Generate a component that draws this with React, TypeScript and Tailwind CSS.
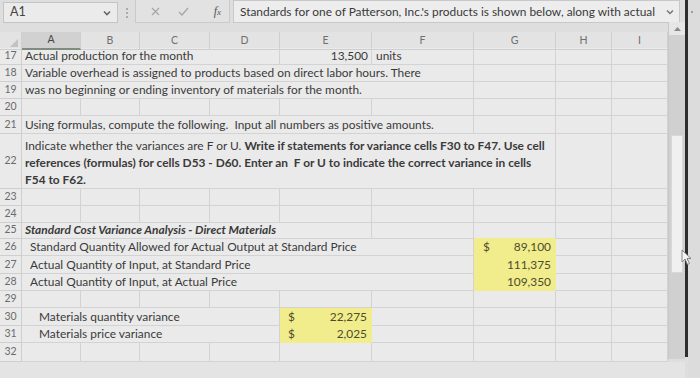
import React from "react";

type CellDef = {
  span: string;
  content?: React.ReactNode;
  cls?: string;
};

const grid =
  "grid grid-cols-[22px_59px_59px_70px_70px_92px_102px_82px_56px_56px]";

function Row({ num, h, cells }: { num: number; h: string; cells: CellDef[] }) {
  return (
    <div className={`${grid} ${h}`}>
      <div className="flex items-center justify-center border-r border-b border-[#cfcfcf] text-[10.5px] text-[#6b6b6b]">
        {num}
      </div>
      {cells.map((c, i) => (
        <div
          key={i}
          className={`${c.span} flex items-center overflow-hidden whitespace-nowrap border-r border-b ${c.cls ?? "border-[#d3d3d3]"}`}
        >
          {c.content}
        </div>
      ))}
    </div>
  );
}

const e = (n: number): CellDef[] => Array.from({ length: n }, () => ({ span: "col-span-1" }));

const Y = "bg-[#f1ed8c] border-[#f1ed8c]";

function Money({ sign, value, pl }: { sign: boolean; value: string; pl: string }) {
  return (
    <div className={`flex w-full items-center justify-between ${pl} pr-[4px] text-[#4d4b2e]`}>
      <span>{sign ? "$" : ""}</span>
      <span>{value}</span>
    </div>
  );
}

export default function App() {
  return (
    <div className="relative flex h-[378px] w-[700px] overflow-hidden bg-[#dedede] font-['Lato',sans-serif] text-[11.9px] text-[#3a3a3a]">
      <div className="flex w-[685px] flex-col">
        {/* formula bar */}
        <div className="flex h-[32px] items-start pt-[2px]">
          <div className="ml-[3px] flex h-[21px] w-[115px] items-center justify-between border border-[#c4c4c4] bg-[#ebebeb] pl-[6px] pr-[6px] text-[12.5px] text-[#444]">
            <span>A1</span>
            <svg width="8" height="6" viewBox="0 0 8 6">
              <path d="M1 1.5 L4 4.5 L7 1.5" stroke="#666" strokeWidth="1.6" fill="none" />
            </svg>
          </div>
          <div className="flex h-[21px] w-[17px] flex-col items-center justify-center gap-[2px]">
            <span className="h-[2px] w-[2px] rounded-full bg-[#9a9a9a]" />
            <span className="h-[2px] w-[2px] rounded-full bg-[#9a9a9a]" />
            <span className="h-[2px] w-[2px] rounded-full bg-[#9a9a9a]" />
          </div>
          <div className="-mt-[2px] flex h-[23px] w-[95px] items-center border-x border-b border-[#cacaca] bg-[#e2e2e2] pl-[15px] pr-[8px]">
            <svg width="9" height="9" viewBox="0 0 9 9">
              <path d="M1 1 L8 8 M8 1 L1 8" stroke="#a6a6a6" strokeWidth="1.2" />
            </svg>
            <svg className="ml-[18px]" width="11" height="9" viewBox="0 0 11 9">
              <path d="M1 5 L4 8 L10 1" stroke="#a6a6a6" strokeWidth="1.3" fill="none" />
            </svg>
            <span className="ml-auto font-['Liberation_Serif',serif] text-[12px] italic text-[#555]">
              f<span className="text-[9px]">x</span>
            </span>
          </div>
          <div className="-mt-[2px] ml-[3px] flex h-[23px] w-[447px] items-center gap-[3px] border border-[#c8c8c8] bg-[#ededed] pl-[6px] pr-[5px] text-[11.9px] text-[#3a3a3a]">
            <span className="min-w-0 flex-1 whitespace-nowrap">
              Standards for one of Patterson, Inc.'s products is shown below, along with actual
            </span>
            <svg className="shrink-0" width="8" height="6" viewBox="0 0 8 6">
              <path d="M1 1.5 L4 4.5 L7 1.5" stroke="#777" strokeWidth="1.5" fill="none" />
            </svg>
          </div>
        </div>

        <div className="flex">
          {/* sheet */}
          <div className="flex w-[668px] flex-col bg-[#eaeaea]">
            {/* column header */}
            <div className={`${grid} h-[16px] bg-[#e3e3e3] text-[10.5px] text-[#707070]`}>
              <div className="relative border-r border-b border-[#cfcfcf]">
                <svg className="absolute bottom-[2px] right-[3px]" width="8" height="8" viewBox="0 0 8 8">
                  <path d="M8 0 L8 8 L0 8 Z" fill="#c2c2c2" />
                </svg>
              </div>
              <div className="flex items-center justify-center border-r border-b-2 border-[#cfcfcf] border-b-[#7d8c7d] bg-[#d1d1d1] text-[#444]">A</div>
              <div className="flex items-center justify-center border-r border-b border-[#cfcfcf]">B</div>
              <div className="flex items-center justify-center border-r border-b border-[#cfcfcf]">C</div>
              <div className="flex items-center justify-center border-r border-b border-[#cfcfcf]">D</div>
              <div className="flex items-center justify-center border-r border-b border-[#cfcfcf]">E</div>
              <div className="flex items-center justify-center border-r border-b border-[#cfcfcf]">F</div>
              <div className="flex items-center justify-center border-r border-b border-[#cfcfcf]">G</div>
              <div className="flex items-center justify-center border-r border-b border-[#cfcfcf]">H</div>
              <div className="flex items-center justify-center border-r border-b border-[#cfcfcf]">I</div>
            </div>

            <Row
              num={17}
              h="h-[17px]"
              cells={[
                { span: "col-span-4", content: <span className="pl-[3px]">Actual production for the month</span> },
                { span: "col-span-1", content: <span className="ml-auto pr-[3px]">13,500</span> },
                { span: "col-span-1", content: <span className="pl-[4px]">units</span> },
                ...e(3),
              ]}
            />
            <Row
              num={18}
              h="h-[17px]"
              cells={[
                {
                  span: "col-span-6",
                  content: (
                    <span className="pl-[3px]">
                      Variable overhead is assigned to products based on direct labor hours. There
                    </span>
                  ),
                },
                ...e(3),
              ]}
            />
            <Row
              num={19}
              h="h-[17px]"
              cells={[
                {
                  span: "col-span-6",
                  content: <span className="pl-[3px]">was no beginning or ending inventory of materials for the month.</span>,
                },
                ...e(3),
              ]}
            />
            <Row num={20} h="h-[17px]" cells={e(9)} />
            <Row
              num={21}
              h="h-[18px]"
              cells={[
                {
                  span: "col-span-6",
                  content: (
                    <span className="pl-[3px]">
                      Using formulas, compute the following.&nbsp; Input all numbers as positive amounts.
                    </span>
                  ),
                },
                ...e(3),
              ]}
            />
            <Row
              num={22}
              h="h-[55px]"
              cells={[
                {
                  span: "col-span-7",
                  cls: "border-[#d3d3d3] !items-start",
                  content: (
                    <div className="pl-[3px] pt-[3px] leading-[17px]">
                      Indicate whether the variances are F or U.{" "}
                      <b>Write if statements for variance cells F30 to F47. Use cell</b>
                      <br />
                      <b>references (formulas) for cells D53 - D60. Enter an&nbsp; F or U to indicate the correct variance in cells</b>
                      <br />
                      <b>F54 to F62.</b>
                    </div>
                  ),
                },
                ...e(2),
              ]}
            />
            <Row num={23} h="h-[17px]" cells={e(9)} />
            <Row num={24} h="h-[16px]" cells={e(9)} />
            <Row
              num={25}
              h="h-[16px]"
              cells={[
                {
                  span: "col-span-5",
                  content: <span className="pl-[3px] font-bold italic">Standard Cost Variance Analysis - Direct Materials</span>,
                },
                ...e(4),
              ]}
            />
            <Row
              num={26}
              h="h-[18px]"
              cells={[
                {
                  span: "col-span-6",
                  content: <span className="pl-[8px]">Standard Quantity Allowed for Actual Output at Standard Price</span>,
                },
                { span: "col-span-1", cls: Y, content: <Money sign value="89,100" pl="pl-[9px]" /> },
                ...e(2),
              ]}
            />
            <Row
              num={27}
              h="h-[18px]"
              cells={[
                { span: "col-span-6", content: <span className="pl-[8px]">Actual Quantity of Input, at Standard Price</span> },
                { span: "col-span-1", cls: Y, content: <Money sign={false} value="111,375" pl="pl-[9px]" /> },
                ...e(2),
              ]}
            />
            <Row
              num={28}
              h="h-[17px]"
              cells={[
                { span: "col-span-6", content: <span className="pl-[8px]">Actual Quantity of Input, at Actual Price</span> },
                { span: "col-span-1", cls: Y, content: <Money sign={false} value="109,350" pl="pl-[9px]" /> },
                ...e(2),
              ]}
            />
            <Row num={29} h="h-[17px]" cells={e(9)} />
            <Row
              num={30}
              h="h-[18px]"
              cells={[
                { span: "col-span-4", content: <span className="pl-[17px]">Materials quantity variance</span> },
                { span: "col-span-1", cls: Y, content: <Money sign value="22,275" pl="pl-[8px]" /> },
                ...e(4),
              ]}
            />
            <Row
              num={31}
              h="h-[17px]"
              cells={[
                { span: "col-span-4", content: <span className="pl-[17px]">Materials price variance</span> },
                { span: "col-span-1", cls: Y, content: <Money sign value="2,025" pl="pl-[8px]" /> },
                ...e(4),
              ]}
            />
            <Row num={32} h="h-[19px]" cells={e(9)} />
          </div>

          {/* vertical scrollbar */}
          <div className="-mt-[10px] flex h-[337px] w-[17px] flex-col border-l border-[#c8c8c8] bg-[#d0d0d0]">
            <div className="flex h-[13px] items-center justify-center bg-[#e6e6e6]">
              <svg width="7" height="4" viewBox="0 0 7 4">
                <path d="M0 4 L3.5 0 L7 4 Z" fill="#8a8a8a" />
              </svg>
            </div>
            <div className="mx-[2px] mt-[100px] h-[138px] border border-[#d8d8d8] bg-[#f0f0f0]" />
          </div>
        </div>
        <div className="flex-1 bg-[#e4e4e4]" />
      </div>

      {/* dark window edge */}
      <div className="h-[357px] w-[3px] bg-[#2e2e2e]" />
      <div className="relative flex-1 bg-[#dcdcdc]">
        <span className="absolute left-[3px] top-[11px] h-[2px] w-[2px] rounded-full bg-[#888]" />
      </div>

      {/* mouse pointer */}
      <svg className="absolute left-[681px] top-[249px]" width="11" height="17" viewBox="0 0 11 17">
        <path d="M1 1 L1 13 L4 10 L6.5 15.5 L8.5 14.5 L6 9.5 L10 9.5 Z" fill="#f4f4f4" stroke="#7a7a7a" strokeWidth="0.9" />
      </svg>
    </div>
  );
}
